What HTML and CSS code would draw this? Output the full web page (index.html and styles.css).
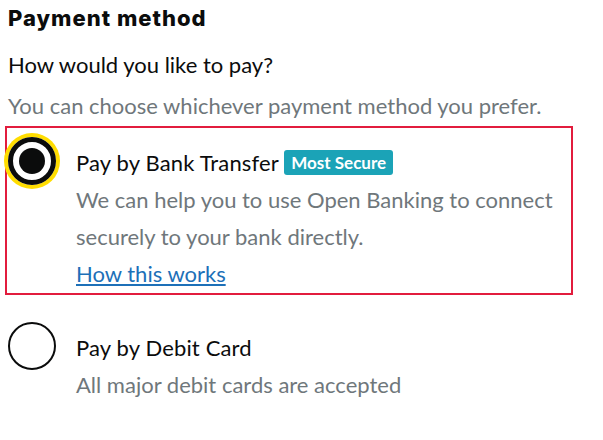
FILE: index.html
```html
<!DOCTYPE html>
<html lang="en">

<head>
    <meta charset="UTF-8">
    <meta name="viewport" content="width=device-width, initial-scale=1.0">
    <title>Payment method</title>
    <link rel="stylesheet" href="styles.css">
</head>

<body>

    <div class="payment">
        <h2 class="payment-title">Payment method</h2>
        <p class="question">How would you like to pay?</p>
        <p class="hint">You can choose whichever payment method you prefer.</p>

        <div class="option option-selected">
            <span class="radio radio-checked"></span>
            <div class="option-body">
                <div class="option-label">Pay by Bank Transfer <span class="badge">Most Secure</span></div>
                <p class="option-text">We can help you to use Open Banking to connect securely to your bank directly.</p>
                <a class="option-link" href="#">How this works</a>
            </div>
        </div><!--option selected end-->

        <div class="option option-plain">
            <span class="radio"></span>
            <div class="option-body">
                <div class="option-label">Pay by Debit Card</div>
                <p class="option-text">All major debit cards are accepted</p>
            </div>
        </div><!--option end-->
    </div>

</body>

</html>
```

FILE: styles.css
```css
body {
    margin: 0;
    padding: 0 8px;
    font-family: 'Lato', sans-serif;
    color: #0b0c0c;
    background: #fff;
}

.payment-title {
    margin: 0;
    padding-top: 4px;
    font-family: 'Inter', sans-serif;
    font-weight: 800;
    font-size: 22px;
    letter-spacing: 1px;
    line-height: 28px;
}

.question {
    margin: 17px 0 0;
    font-size: 22px;
    line-height: 32px;
}

.hint {
    margin: 9px 0 0;
    font-size: 22px;
    line-height: 32px;
    color: #6f777b;
}

.option {
    display: flex;
    gap: 20px;
}

.option-selected {
    margin-top: 4px;
    margin-left: -3px;
    width: 564px;
    height: 165px;
    border: 2px solid #e21c3d;
}

.option-plain {
    margin-top: 27px;
}

.radio {
    flex: none;
    box-sizing: border-box;
    width: 48px;
    height: 48px;
    border: 2px solid #0b0c0c;
    border-radius: 50%;
    position: relative;
}

.option-selected .radio {
    margin-left: 1px;
    margin-top: 9px;
}

.radio-checked {
    border-width: 5px;
    box-shadow: 0 0 0 4px #ffdd00;
}

.radio-checked::after {
    content: "";
    position: absolute;
    left: 6px;
    top: 6px;
    width: 26px;
    height: 26px;
    border-radius: 50%;
    background: #0b0c0c;
}

.option-body {
    padding-top: 10px;
}

.option-selected .option-body {
    padding-top: 19px;
}

.option-label {
    font-size: 22px;
    line-height: 32px;
    letter-spacing: 0.15px;
}

.badge {
    display: inline-block;
    vertical-align: 2px;
    padding: 0 7px;
    border-radius: 3px;
    background: #1ba3b7;
    color: #fff;
    font-weight: 700;
    font-size: 17px;
    line-height: 25px;
    letter-spacing: 0;
}

.option-text {
    margin: 2px 0 0;
    font-size: 22px;
    line-height: 37px;
    color: #6f777b;
}

.option-link {
    font-size: 22px;
    line-height: 37px;
    color: #1d70b8;
}
```
